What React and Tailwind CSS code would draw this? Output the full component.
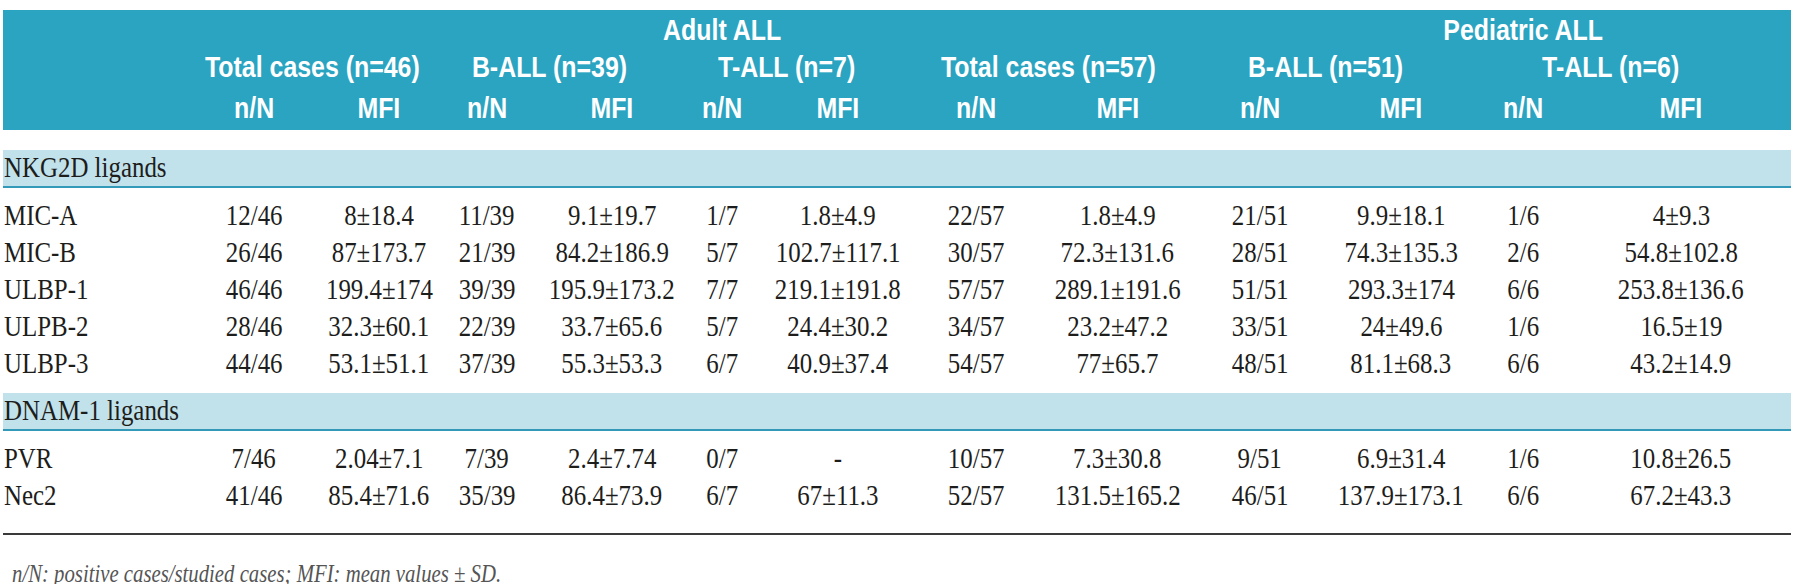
import clsx from "clsx";

const GRID =
  "grid grid-cols-[189px_124px_117px_117px_116px_113px_128px_139px_143px_142px_131px_140px_158px_31px]";

// small nudges so every column sits where the reference puts it
const shift = [
  "",
  "pl-[9px]",
  "pr-[9px]",
  "pl-[8px]",
  "",
  "pr-[10px]",
  "",
  "",
  "",
  "pl-[9px]",
  "pr-[18px]",
  "",
];

const groups = [
  { label: "Total cases (n=46)", cls: "col-start-2 col-span-2" },
  { label: "B-ALL (n=39)", cls: "col-start-4 col-span-2" },
  { label: "T-ALL (n=7)", cls: "col-start-6 col-span-2" },
  { label: "Total cases (n=57)", cls: "col-start-8 col-span-2" },
  { label: "B-ALL (n=51)", cls: "col-start-10 col-span-2" },
  { label: "T-ALL (n=6)", cls: "col-start-12 col-span-2" },
];

const sections = [
  {
    title: "NKG2D ligands",
    rows: [
      ["MIC-A", "12/46", "8±18.4", "11/39", "9.1±19.7", "1/7", "1.8±4.9", "22/57", "1.8±4.9", "21/51", "9.9±18.1", "1/6", "4±9.3"],
      ["MIC-B", "26/46", "87±173.7", "21/39", "84.2±186.9", "5/7", "102.7±117.1", "30/57", "72.3±131.6", "28/51", "74.3±135.3", "2/6", "54.8±102.8"],
      ["ULBP-1", "46/46", "199.4±174", "39/39", "195.9±173.2", "7/7", "219.1±191.8", "57/57", "289.1±191.6", "51/51", "293.3±174", "6/6", "253.8±136.6"],
      ["ULPB-2", "28/46", "32.3±60.1", "22/39", "33.7±65.6", "5/7", "24.4±30.2", "34/57", "23.2±47.2", "33/51", "24±49.6", "1/6", "16.5±19"],
      ["ULBP-3", "44/46", "53.1±51.1", "37/39", "55.3±53.3", "6/7", "40.9±37.4", "54/57", "77±65.7", "48/51", "81.1±68.3", "6/6", "43.2±14.9"],
    ],
  },
  {
    title: "DNAM-1 ligands",
    rows: [
      ["PVR", "7/46", "2.04±7.1", "7/39", "2.4±7.74", "0/7", "-", "10/57", "7.3±30.8", "9/51", "6.9±31.4", "1/6", "10.8±26.5"],
      ["Nec2", "41/46", "85.4±71.6", "35/39", "86.4±73.9", "6/7", "67±11.3", "52/57", "131.5±165.2", "46/51", "137.9±173.1", "6/6", "67.2±43.3"],
    ],
  },
];

function Cell({ children, className }) {
  return (
    <div className={clsx("flex justify-center whitespace-nowrap", className)}>
      <span className="inline-block scale-x-[0.83]">{children}</span>
    </div>
  );
}

function Label({ children }) {
  return (
    <div className="flex whitespace-nowrap pl-[1px]">
      <span className="inline-block origin-left scale-x-[0.83]">{children}</span>
    </div>
  );
}

function Header() {
  return (
    <div className="bg-[#2aa4c1] pt-[2px] pb-[4px] font-['Liberation_Sans',Arial,sans-serif] text-[30px] font-bold leading-[36px] text-white">
      <div className={clsx(GRID, "h-[37px]")}>
        <Cell className="col-start-6">Adult ALL</Cell>
        <Cell className="col-start-12 pr-[18px]">Pediatric ALL</Cell>
      </div>
      <div className={clsx(GRID, "h-[41px]")}>
        {groups.map((g) => (
          <Cell key={g.cls} className={g.cls}>
            {g.label}
          </Cell>
        ))}
      </div>
      <div className={clsx(GRID, "h-[36px]")}>
        {shift.map((s, i) => (
          <Cell key={i} className={clsx(i === 0 && "col-start-2", s)}>
            {i % 2 === 0 ? "n/N" : "MFI"}
          </Cell>
        ))}
      </div>
    </div>
  );
}

function Section({ section, first }) {
  return (
    <div className={first ? "mt-[20px]" : "mt-[12px]"}>
      <div className="h-[38px] border-b-2 border-[#3399b8] bg-[#c1e1eb] leading-[34px]">
        <Label>{section.title}</Label>
      </div>
      <div className="pt-[8px]">
        {section.rows.map((row) => (
          <div key={row[0]} className={clsx(GRID, "h-[37px] leading-[37px]")}>
            <Label>{row[0]}</Label>
            {row.slice(1).map((v, i) => (
              <Cell key={i} className={shift[i]}>
                {v}
              </Cell>
            ))}
          </div>
        ))}
      </div>
    </div>
  );
}

export default function App() {
  return (
    <div className="h-[584px] w-[1800px] bg-white pt-[10px]">
      <div className="ml-[3px] w-[1788px] font-['Liberation_Serif',serif] text-[30px] text-[#1d1d1b]">
        <Header />
        {sections.map((s, i) => (
          <Section key={s.title} section={s} first={i === 0} />
        ))}
        <div className="mt-[20px] border-t-2 border-[#3a3a3a] pt-[14px] pl-[9px]">
          <span className="inline-block origin-left scale-x-[0.83] whitespace-nowrap text-[25px] italic leading-[30px] text-[#555]">
            n/N: positive cases/studied cases; MFI: mean values ± SD.
          </span>
        </div>
      </div>
    </div>
  );
}
